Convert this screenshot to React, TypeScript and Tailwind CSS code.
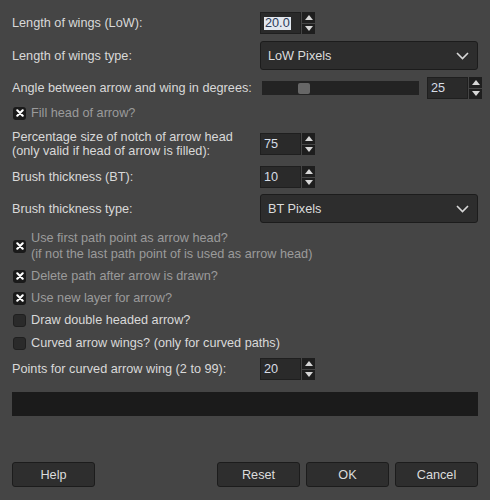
import React from "react"

const font = { fontFamily: '"Liberation Sans", Arial, sans-serif' }

function Arrows() {
  return (
    <div className="flex w-[13px] flex-col gap-px">
      <div className="flex flex-1 items-center justify-center bg-[#1e1e1e]">
        <svg width="8" height="5" viewBox="0 0 8 5">
          <path d="M0 5 L4 0 L8 5 Z" fill="#d6d6d6" />
        </svg>
      </div>
      <div className="flex flex-1 items-center justify-center bg-[#1e1e1e]">
        <svg width="8" height="5" viewBox="0 0 8 5">
          <path d="M0 0 L4 5 L8 0 Z" fill="#d6d6d6" />
        </svg>
      </div>
    </div>
  )
}

function SpinBox({ value, selected }: { value: string; selected?: boolean }) {
  return (
    <div className="flex h-[22px] w-[55px] shrink-0 gap-px">
      <div className="flex flex-1 items-center border border-[#1f1f1f] bg-[#2a2a2a] pl-[3px] text-[#d7dde6]">
        {selected ? (
          <span className="bg-[#e2e7ee] px-px leading-[13px] text-[#2b3a58]">{value}</span>
        ) : (
          <span>{value}</span>
        )}
      </div>
      <Arrows />
    </div>
  )
}

function Dropdown({ value }: { value: string }) {
  return (
    <div className="flex h-[29px] flex-1 items-center justify-between rounded-[3px] border border-[#1c1c1c] bg-[#2d2d2d] pl-[7px] pr-[8px] text-[#dcdcdc]">
      <span>{value}</span>
      <svg width="13" height="8" viewBox="0 0 13 8">
        <path d="M1 1 L6.5 6.5 L12 1" fill="none" stroke="#d8d8d8" strokeWidth="1.6" />
      </svg>
    </div>
  )
}

function Check({ checked }: { checked: boolean }) {
  return checked ? (
    <div className="flex h-[13px] w-[13px] shrink-0 items-center justify-center rounded-[3px] bg-[#1a1a1a]">
      <svg width="8" height="8" viewBox="0 0 8 8">
        <path d="M1.3 1.3 L6.7 6.7 M6.7 1.3 L1.3 6.7" stroke="#ffffff" strokeWidth="2.1" strokeLinecap="round" />
      </svg>
    </div>
  ) : (
    <div className="h-[13px] w-[13px] shrink-0 rounded-[3px] border border-[#1f1f1f] bg-[#2a2a2a]" />
  )
}

function Row({ label, children, className = "" }: { label: React.ReactNode; children: React.ReactNode; className?: string }) {
  return (
    <div className={`flex items-center ${className}`}>
      <div className="w-[248px] shrink-0 text-[#d9d9d9]">{label}</div>
      <div className="flex flex-1 items-center">{children}</div>
    </div>
  )
}

function CheckRow({ checked, dim, children, className = "" }: { checked: boolean; dim?: boolean; children: React.ReactNode; className?: string }) {
  return (
    <div className={`flex items-center gap-[5px] pl-px ${className}`}>
      <Check checked={checked} />
      <div className={dim ? "text-[#9b9b9b]" : "text-[#d9d9d9]"}>{children}</div>
    </div>
  )
}

function Button({ children }: { children: React.ReactNode }) {
  return (
    <button className="flex h-[25px] w-[83px] items-center justify-center rounded-[3px] border border-[#1c1c1c] bg-[#2e2e2e] text-[#dcdcdc]">
      {children}
    </button>
  )
}

export default function App() {
  return (
    <div className="h-[500px] w-[490px] bg-[#454545] px-3 pt-3 text-[12.7px] leading-[14px]" style={font}>
      <Row label="Length of wings (LoW):" className="h-[22px]">
        <SpinBox value="20.0" selected />
      </Row>
      <Row label="Length of wings type:" className="mt-[7px] h-[29px]">
        <Dropdown value="LoW Pixels" />
      </Row>
      <Row label="Angle between arrow and wing in degrees:" className="mt-[7px] h-[22px]">
        <div className="ml-[2px] mr-[8px] flex h-[14px] flex-1 items-center bg-[#232323]">
          <div className="ml-[36px] h-[11px] w-[12px] rounded-[2px] bg-[#676767]" />
        </div>
        <div className="w-[51px]">
          <SpinBox value="25" />
        </div>
      </Row>
      <CheckRow checked dim className="mt-[6px] h-[16px]">
        Fill head of arrow?
      </CheckRow>
      <Row
        label={
          <>
            Percentage size of notch of arrow head
            <br />
            (only valid if head of arrow is filled):
          </>
        }
        className="mt-[9px] h-[28px]"
      >
        <SpinBox value="75" />
      </Row>
      <Row label="Brush thickness (BT):" className="mt-[8px] h-[22px]">
        <SpinBox value="10" />
      </Row>
      <Row label="Brush thickness type:" className="mt-[6px] h-[29px]">
        <Dropdown value="BT Pixels" />
      </Row>
      <CheckRow checked dim className="mt-[7px] h-[32px] leading-[16px]">
        Use first path point as arrow head?
        <br />
        (if not the last path point of is used as arrow head)
      </CheckRow>
      <CheckRow checked dim className="mt-[3px] h-[22px]">
        Delete path after arrow is drawn?
      </CheckRow>
      <CheckRow checked dim className="h-[22px]">
        Use new layer for arrow?
      </CheckRow>
      <CheckRow checked={false} className="h-[22px]">
        Draw double headed arrow?
      </CheckRow>
      <CheckRow checked={false} className="mt-px h-[22px]">
        Curved arrow wings? (only for curved paths)
      </CheckRow>
      <Row label="Points for curved arrow wing (2 to 99):" className="mt-[4px] h-[22px]">
        <SpinBox value="20" />
      </Row>
      <div className="mt-[12px] h-[24px] bg-[#1b1b1b]" />
      <div className="mt-[46px] flex">
        <Button>Help</Button>
        <div className="flex-1" />
        <div className="flex gap-[6px]">
          <Button>Reset</Button>
          <Button>OK</Button>
          <Button>Cancel</Button>
        </div>
      </div>
    </div>
  )
}
